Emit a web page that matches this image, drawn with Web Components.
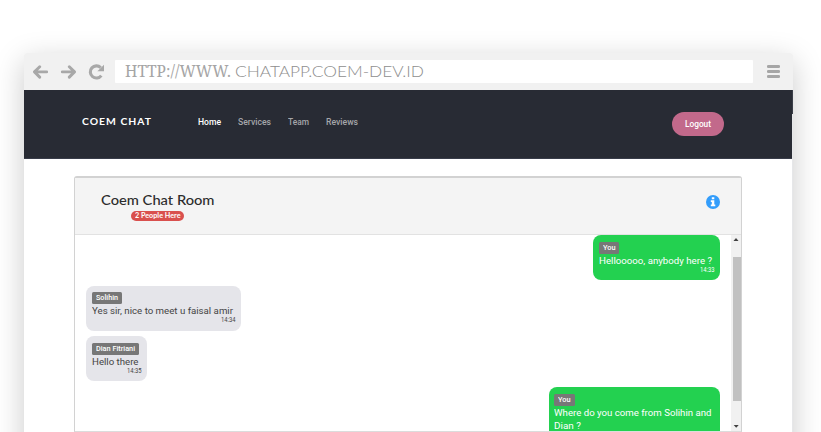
<!DOCTYPE html>
<html lang="en">
<head>
<meta charset="utf-8">
<title>Coem Chat</title>
<style>
html,body{margin:0;height:432px;overflow:hidden;background:#fff;font-family:Roboto,sans-serif}
</style>
</head>
<body>
<browser-window>
  <browser-bar slot="bar"></browser-bar>
  <site-nav></site-nav>
  <chat-room>
    <chat-message side="right" style="--w:126.5px" name="You" name-w="12.5" time="14:33"><fit-text w="113">Hellooooo, anybody here ?</fit-text></chat-message>
    <chat-message style="--w:154.5px" name="Solihin" name-w="22" time="14:34"><fit-text w="141">Yes sir, nice to meet u faisal amir</fit-text></chat-message>
    <chat-message style="--w:61px" name="Dian Fitriani" name-w="39" time="14:35"><fit-text w="46.5">Hello there</fit-text></chat-message>
    <chat-message side="right" style="--w:171px" name="You" name-w="12.5"><fit-text w="157.5">Where do you come from Solihin and</fit-text><br><fit-text w="27">Dian ?</fit-text></chat-message>
  </chat-room>
</browser-window>
<script>
const define = (name, html, setup) => customElements.define(name, class extends HTMLElement {
  connectedCallback() {
    if (this.shadowRoot) return;
    const t = document.createElement('template');
    t.innerHTML = html;
    this.attachShadow({ mode: 'open' }).append(t.content.cloneNode(true));
    if (setup) setup(this, this.shadowRoot);
  }
});

define('browser-window', `<style>
:host{display:block;box-sizing:border-box;height:432px;padding:53px 28px 0 24px;overflow:hidden}
.frame{width:769px;height:420px;border-radius:3px 3px 0 0;box-shadow:0 8px 30px rgba(0,0,0,.21);display:flex;flex-direction:column;
 background:linear-gradient(#3a3e48,#3a3e48) 768px 37px/1px 24px no-repeat,linear-gradient(#e6e7e9,#e6e7e9) 768px 61px/1px 400px no-repeat,#fff}
.page{width:768px}
</style><div class="frame"><slot name="bar"></slot><div class="page"><slot></slot></div></div>`);

define('browser-bar', `<style>
:host{display:flex;box-sizing:border-box;height:37px;flex:none;background:#f1f1f1;border-radius:3px 3px 0 0;align-items:center;padding:0 13px 0 9px}
svg{display:block;flex:none}
.url{width:638px;height:23px;margin-left:10px;background:#fff;border-radius:1px;display:flex;align-items:center;padding-left:10px;box-sizing:border-box;color:#a5a5a5;font-size:15.5px;line-height:23px}
.a{font-family:"Noto Serif","Liberation Serif",serif}
.b{font-family:Lato,sans-serif;font-size:16.5px;font-weight:300;margin:-1px 0 0 4px;color:#8e8e8e}
.menu{margin-left:14px}
</style>
<svg width="72" height="16" viewBox="0 0 72 16" fill="none" stroke="#a8a8a8" stroke-width="2.9" stroke-linecap="round" stroke-linejoin="round">
<path d="M6.7 2.7 1.5 7.9 6.7 13.1M2 7.9h11.7M36.3 2.7l5.2 5.2-5.2 5.2M41 7.9H29.3"/>
<path d="M68.3 11.6A6.1 6.1 0 1 1 67.7 3.6" stroke-width="3.1" stroke-linecap="butt"/><path d="M71 .7v6.6h-6.6z" fill="#a8a8a8" stroke="none"/></svg>
<div class="url"><fit-text class="a" w="106">HTTP://WWW.</fit-text><fit-text class="b" w="189">CHATAPP.COEM-DEV.ID</fit-text></div>
<svg class="menu" width="13" height="13" viewBox="0 0 13 13" fill="#a6a6a6"><rect width="13" height="3" rx="1.3"/><rect y="5" width="13" height="3" rx="1.3"/><rect y="10" width="13" height="3" rx="1.3"/></svg>`);

define('site-nav', `<style>
:host{display:flex;box-sizing:border-box;height:69px;background:#282b34;border-bottom:1px solid #383c49;padding:0 68px 0 58px;align-items:flex-start;color:#a5a6aa;font-size:8.7px;line-height:12px;font-weight:500}
.brand{font:700 10.2px/14px Lato,sans-serif;letter-spacing:1px;color:#fff;margin:24px 46px 0 0}
nav{display:flex;gap:17px;margin-top:26px}
.on{color:#fff}
button{all:unset;box-sizing:border-box;display:flex;justify-content:center;align-items:center;margin:22px 0 0 auto;width:52px;height:24px;border-radius:12px;background:#c2698b;color:#fff}
</style><fit-text class="brand" w="70">COEM CHAT</fit-text>
<nav><fit-text class="on" w="23">Home</fit-text><fit-text w="33">Services</fit-text><fit-text w="21">Team</fit-text><fit-text w="32">Reviews</fit-text></nav>
<button><fit-text w="26">Logout</fit-text></button>`);

define('chat-room', `<style>
:host{display:block;box-sizing:border-box;width:668px;height:256px;margin:17px 0 0 50px;border:1.5px solid #d2d2d2;border-top-width:2px;border-radius:3px 3px 0 0;border-bottom:1px solid #dcdcdc;background:#fff}
header{box-sizing:border-box;height:57px;background:#f4f4f4;border-bottom:1px solid #e2e2e2;display:flex;justify-content:space-between;padding:13px 21.5px 0 26px}
h1{margin:0;font:500 14px/17px Lato,sans-serif;color:#2c2c2c}
.count{display:flex;justify-content:center;align-items:center;box-sizing:border-box;width:53px;height:10px;margin:3px auto 0;border-radius:5px;background:#d9504e;color:#fff;font:700 7.5px/10px Lato,sans-serif}
.info{margin-top:4px}
.body{height:196px;display:flex;overflow:hidden}
.log{flex:1;display:flex;flex-direction:column;gap:5.7px;padding:0 11.5px 0 11px}
.bar{width:10px;background:#f1f1f1;display:flex;flex-direction:column;align-items:center;color:#505050}
.thumb{width:8px;height:144px;background:#c1c1c1;align-self:flex-end;margin-top:14px}
</style>
<header><div><h1><fit-text w="113.5">Coem Chat Room</fit-text></h1><div class="count"><fit-text w="45.5">2 People Here</fit-text></div></div>
<svg class="info" width="14" height="14" viewBox="0 0 14 14"><circle cx="7" cy="7" r="7" fill="#339dfb"/><path fill="#fff" d="M5.8 2.2h2.5v2H5.8zM4.8 5.3h3.5v4.3h1v1.7H4.8V9.6h1V7h-1z"/></svg></header>
<div class="body"><div class="log"><slot></slot></div>
<div class="bar"><svg width="10" height="8" viewBox="0 0 10 8"><path d="M5 3l2.5 3h-5z" fill="#404040"/></svg><div class="thumb"></div><svg style="margin-top:21px" width="10" height="8" viewBox="0 0 10 8"><path d="M2.7 3h5L5.2 5.8z" fill="#404040"/></svg></div></div>`);

define('chat-message', `<style>
:host{display:block;flex:none;box-sizing:border-box;width:var(--w);height:45px;border-radius:8px;background:#e5e5ea;color:#444;padding:6.5px 5.5px 0 5.5px;font-size:9.7px;line-height:13px}
:host([side=right]){background:#23d150;color:#fff;align-self:flex-end}
:host(:last-of-type){height:58px}
.name{display:block;width:max-content;height:12px;padding:0 4px;border-radius:1.5px;background:#777;color:#fff;font-size:7.3px;line-height:12px;font-weight:500}
.text{display:block;white-space:nowrap}
time{display:block;text-align:right;font-size:6.5px;line-height:7px}
</style><span class="name"></span><span class="text"><slot></slot></span>`, (el, root) => {
  const label = (width, text) => {
    const node = document.createElement('fit-text');
    node.setAttribute('w', width);
    node.textContent = text;
    return node;
  };
  root.querySelector('.name').append(label(el.getAttribute('name-w'), el.getAttribute('name')));
  if (el.hasAttribute('time')) {
    const time = document.createElement('time');
    time.append(label(14.5, el.getAttribute('time')));
    root.append(time);
  }
});

// A single line of text, scaled horizontally to the width in its "w" attribute.
define('fit-text', `<style>
:host{display:inline-block;vertical-align:top;white-space:nowrap;flex:none;text-align:left}
span{display:inline-block;vertical-align:top;transform-origin:0 0}
</style><span><slot></slot></span>`, (el, root) => {
  const w = parseFloat(el.getAttribute('w'));
  if (!w) return;
  const span = root.querySelector('span');
  const natural = span.getBoundingClientRect().width;
  el.style.width = w + 'px';
  if (natural) span.style.transform = 'scaleX(' + w / natural + ')';
});
</script>
</body>
</html>
